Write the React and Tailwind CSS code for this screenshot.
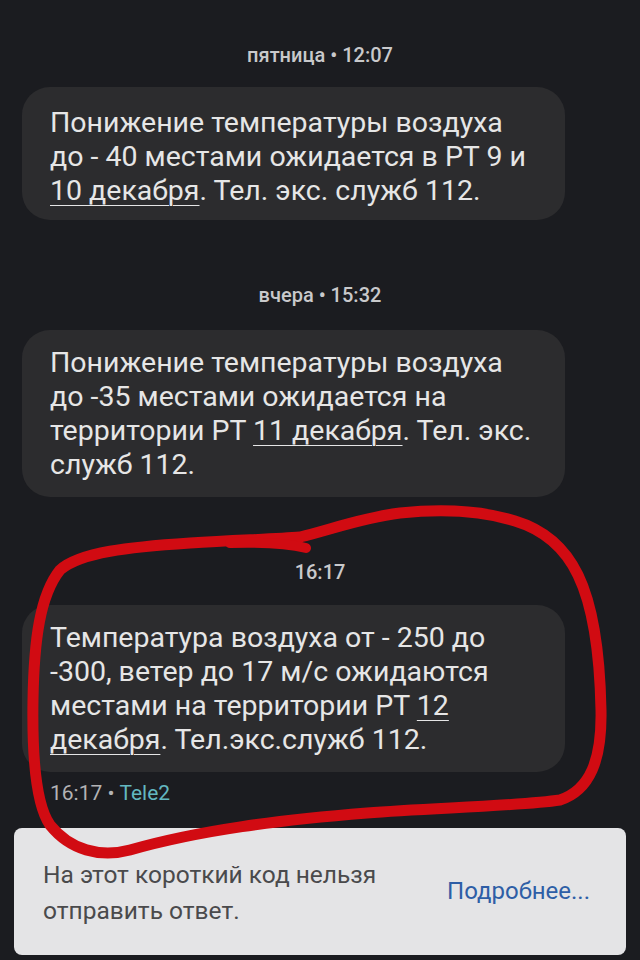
import React from "react";

const U = ({ children }) => (
  <span className="underline decoration-1 underline-offset-[5px]">{children}</span>
);

function Header({ children, className = "" }) {
  return (
    <div className={"text-center text-[20px] leading-[24px] font-medium text-[#c9c9cb] " + className}>
      {children}
    </div>
  );
}

function Bubble({ lines, className = "" }) {
  return (
    <div className={"mx-[22px] w-[543px] rounded-[28px] bg-[#2c2c2e] pl-[28px] pr-4 text-[28.5px] leading-[34px] text-[#e6e6e6] whitespace-nowrap " + className}>
      {lines.map((l, i) => (
        <div key={i}>{l}</div>
      ))}
    </div>
  );
}

export default function App() {
  return (
    <div
      className="relative w-[640px] h-[960px] overflow-hidden bg-[#1b1c20] flex flex-col"
      style={{ fontFamily: "Roboto, 'Noto Sans', sans-serif" }}
    >
      <Header className="mt-[43px]">пятница • 12:07</Header>
      <Bubble
        className="mt-[20px] pt-[19px] pb-[12px]"
        lines={[
          "Понижение температуры воздуха",
          "до - 40 местами ожидается в РТ 9 и",
          <>
            <U>10 декабря</U>. Тел. экс. служб 112.
          </>,
        ]}
      />
      <Header className="mt-[63px]">вчера • 15:32</Header>
      <Bubble
        className="mt-[23px] pt-[16px] pb-[15px]"
        lines={[
          "Понижение температуры воздуха",
          "до -35 местами ожидается на",
          <>
            территории РТ <U>11 декабря</U>. Тел. экс.
          </>,
          "служб 112.",
        ]}
      />
      <Header className="mt-[63px]">16:17</Header>
      <Bubble
        className="mt-[21px] pt-[16px] pb-[15px]"
        lines={[
          "Температура воздуха от - 250 до",
          "-300, ветер до 17 м/с ожидаются",
          <>
            местами на территории РТ <U>12</U>
          </>,
          <>
            <U>декабря</U>. Тел.экс.служб 112.
          </>,
        ]}
      />
      <div className="mt-[10px] pl-[50px] text-[21px] leading-[22px] text-[#b3b3b5]">
        16:17 • <span className="text-[#63b7c0]">Tele2</span>
      </div>
      <div className="mt-[24px] mx-[14px] w-[612px] h-[127px] rounded-[8px] bg-[#e4e4e6] flex items-center justify-between pl-[29px] pr-[36px]">
        <div className="text-[24.5px] leading-[36px] text-[#4a4a4c] pt-[2px]">
          <div>На этот короткий код нельзя</div>
          <div>отправить ответ.</div>
        </div>
        <div className="text-[24px] leading-[30px] text-[#2e5ea6] mb-[2px]">Подробнее...</div>
      </div>

      <svg
        className="absolute inset-0 pointer-events-none"
        width="640"
        height="960"
        viewBox="0 0 640 960"
        fill="none"
      >
        <path
          d="M 300 537 C 330 530, 360 518, 400 513 C 440 509, 480 510, 515 521 C 545 530, 565 548, 578 575 C 595 610, 600 660, 601 710 C 602 760, 590 790, 560 800 C 520 806, 430 808, 367 813 C 280 820, 200 830, 130 850 C 100 858, 70 850, 50 825 C 36 805, 32 760, 33 700 C 34 640, 40 595, 60 570 C 80 552, 130 547, 190 543 C 240 540, 275 539, 300 537"
          stroke="#d10b12"
          strokeWidth="11"
          strokeLinecap="round"
          strokeLinejoin="round"
        />
        <path
          d="M 306 548 C 290 544, 265 542, 230 543"
          stroke="#d10b12"
          strokeWidth="10"
          strokeLinecap="round"
        />
      </svg>
    </div>
  );
}
